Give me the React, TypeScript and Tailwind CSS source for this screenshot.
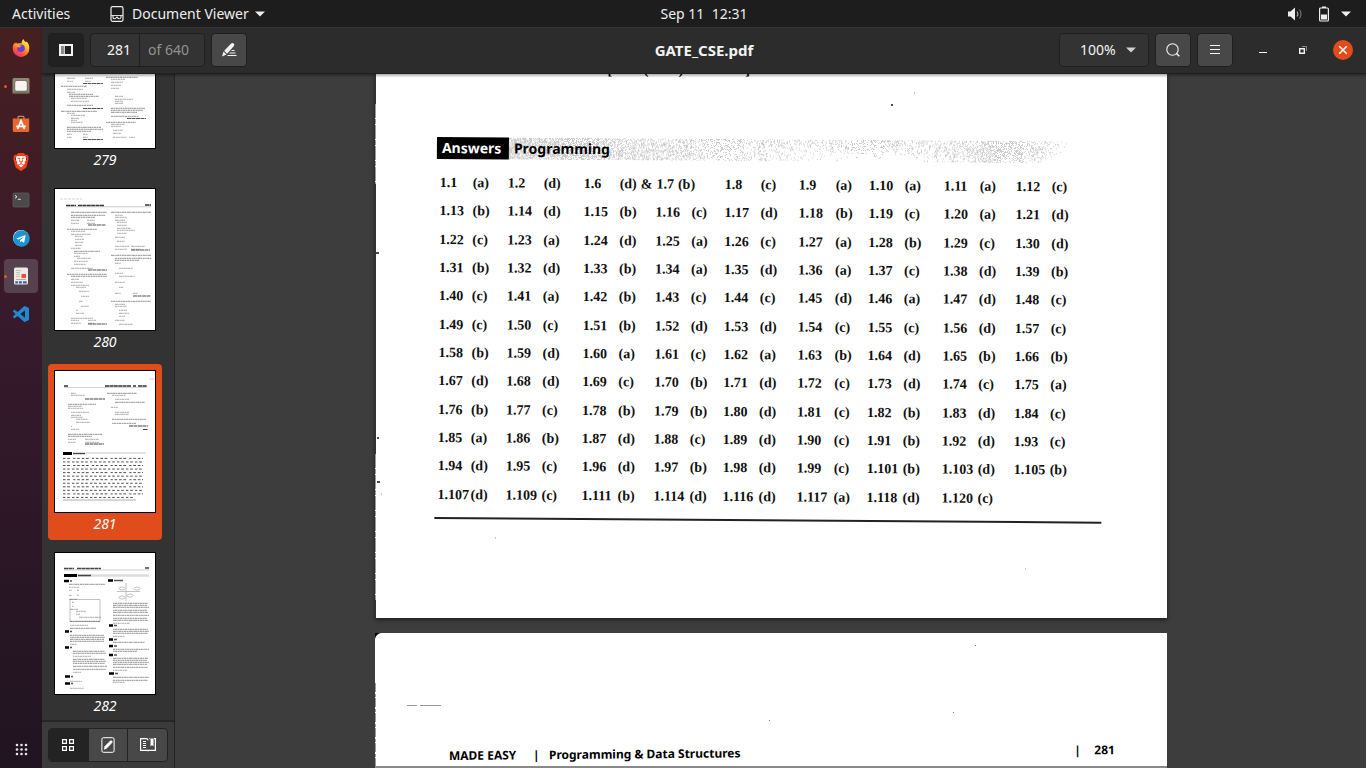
import type { ReactNode } from "react";
import { FaTelegram } from "react-icons/fa";
import { SiBrave } from "react-icons/si";

/* ---------- Answer key data ---------- */

const ANSWER_ROWS: string[] = [
  "1.13 b|1.14 d|1.15 b|1.16 c|1.17 d|1.18 b|1.19 c|1.20 a|1.21 d",
  "1.22 c|1.23 a|1.24 d|1.25 a|1.26 c|1.27 a|1.28 b|1.29 c|1.30 d",
  "1.31 b|1.32 d|1.33 b|1.34 a|1.35 d|1.36 a|1.37 c|1.38 d|1.39 b",
  "1.40 c|1.41 a|1.42 b|1.43 c|1.44 c|1.45 d|1.46 a|1.47 d|1.48 c",
  "1.49 c|1.50 c|1.51 b|1.52 d|1.53 d|1.54 c|1.55 c|1.56 d|1.57 c",
  "1.58 b|1.59 d|1.60 a|1.61 c|1.62 a|1.63 b|1.64 d|1.65 b|1.66 b",
  "1.67 d|1.68 d|1.69 c|1.70 b|1.71 d|1.72 c|1.73 d|1.74 c|1.75 a",
  "1.76 b|1.77 c|1.78 b|1.79 b|1.80 d|1.81 c|1.82 b|1.83 d|1.84 c",
  "1.85 a|1.86 b|1.87 d|1.88 c|1.89 d|1.90 c|1.91 b|1.92 d|1.93 c",
  "1.94 d|1.95 c|1.96 d|1.97 b|1.98 d|1.99 c|1.101 b|1.103 d|1.105 b",
  "1.107 d|1.109 c|1.111 b|1.114 d|1.116 d|1.117 a|1.118 d|1.120 c",
];

/* ---------- Thumbnails ---------- */

// Each mark is [x, y, width]; wide marks read as lines of tiny text.
type Mark = [number, number, number];

const P279: Mark[] = [
  [12, 71, 8], [12, 74, 6], [30, 71, 8], [30, 74, 6],
  [6, 79, 26], [12, 82, 16], [12, 85, 8], [14, 87, 24], [14, 89, 30], [16, 91, 16], [16, 94, 18],
  [12, 98, 26], [6, 104, 36], [12, 106, 8], [16, 108, 14], [16, 111, 8], [16, 113, 6], [16, 115, 12],
  [12, 120, 34], [12, 122, 36], [12, 124, 24], [12, 127, 5], [28, 127, 5], [12, 130, 5], [28, 130, 5],
  [51, 70, 32], [56, 72, 14], [56, 75, 12], [56, 78, 10], [56, 81, 8], [60, 89, 8], [60, 92, 18], [60, 94, 8], [60, 96, 8],
  [56, 101, 34], [56, 103, 32], [56, 105, 26], [56, 109, 28], [51, 115, 30], [56, 117, 14], [56, 119, 10], [58, 123, 10], [58, 126, 8], [58, 130, 14], [74, 130, 6],
];
const P280: Mark[] = [
  [16, 23, 36], [16, 26, 34], [16, 28, 24], [16, 31, 8], [32, 31, 8], [16, 34, 8], [32, 34, 8],
  [12, 40, 30], [16, 42, 14], [16, 45, 20], [20, 47, 8], [20, 50, 9], [20, 53, 8], [20, 56, 7],
  [16, 59, 10], [19, 62, 26], [19, 64, 14], [19, 67, 6], [22, 69, 14], [19, 72, 14], [19, 75, 12],
  [16, 79, 22], [12, 85, 40], [16, 87, 36], [16, 90, 8], [16, 93, 12], [16, 96, 18], [21, 98, 10],
  [24, 102, 10], [26, 107, 8], [24, 112, 4], [26, 117, 8], [21, 121, 2], [21, 124, 8], [16, 129, 22], [16, 131, 8], [33, 131, 8], [16, 134, 10], [33, 134, 6],
  [56, 23, 40], [60, 26, 8], [60, 28, 12], [60, 31, 10], [62, 33, 10], [62, 36, 10], [62, 39, 14], [62, 41, 18], [62, 44, 10], [60, 48, 10], [62, 52, 8],
  [60, 57, 14], [76, 57, 14], [60, 60, 12], [76, 60, 10], [56, 66, 40], [60, 69, 36], [60, 71, 24], [60, 74, 6], [64, 79, 14], [60, 84, 8], [64, 87, 16], [60, 93, 10], [64, 98, 4],
  [60, 104, 6], [78, 104, 5], [56, 112, 40], [60, 115, 10], [60, 117, 12], [64, 121, 8], [64, 124, 10], [64, 127, 6], [60, 131, 10], [64, 135, 14],
];
const P281: Mark[] = [
  [16, 22, 5], [16, 24, 14], [13, 33, 28], [13, 35, 14], [13, 37, 15], [16, 41, 18], [16, 44, 10], [16, 46, 12], [21, 48, 12], [21, 51, 14], [16, 55, 1], [16, 58, 8],
  [13, 63, 34], [13, 65, 24], [13, 68, 8], [30, 68, 14], [13, 71, 8], [30, 71, 14],
  [52, 22, 30], [57, 24, 14], [60, 28, 14], [60, 31, 30], [56, 36, 7], [60, 41, 14], [60, 43, 14], [57, 48, 34], [57, 52, 24],
];
const P282: Mark[] = [
  [14, 31, 36], [14, 34, 10], [14, 37, 3], [22, 37, 2], [14, 42, 3], [22, 42, 2], [14, 46, 8], [17, 49, 2], [17, 53, 2], [15, 56, 8], [21, 58, 10], [21, 61, 4], [24, 64, 22], [15, 68, 30],
  [15, 72, 18], [15, 75, 26], [15, 82, 34], [15, 84, 35], [15, 86, 34], [15, 88, 34], [15, 91, 7],
  [18, 98, 32], [18, 100, 33], [18, 103, 18], [18, 106, 32], [18, 108, 33], [18, 110, 32], [18, 113, 34], [18, 116, 33], [18, 119, 8], [15, 128, 12], [15, 135, 14],
  [58, 50, 35], [58, 52, 34], [58, 54, 36], [58, 57, 34], [58, 59, 35], [58, 62, 36], [58, 65, 34], [58, 67, 35], [58, 70, 17], [58, 76, 35], [58, 78, 36], [58, 80, 35], [58, 83, 12],
  [58, 89, 32], [58, 96, 36], [58, 98, 24], [58, 105, 35], [58, 107, 34], [58, 109, 36], [58, 111, 34], [58, 114, 35], [58, 117, 14], [58, 124, 36], [58, 127, 35], [58, 129, 12],
];

function Marks({ marks }: { marks: Mark[] }) {
  return (
    <g stroke="#555" strokeWidth="1">
      {marks.map(([x, y, w], i) => (
        <path
          key={i}
          d={`M${x} ${y + 0.3}h${w}`}
          strokeOpacity={w > 22 ? 0.65 : 0.5}
          strokeDasharray={i % 3 === 0 ? "3 .4 1.4 .5" : i % 3 === 1 ? "2.2 .5 1.5 .4" : "1.6 .4 2.4 .5"}
        />
      ))}
    </g>
  );
}

function ThumbSvg({ children }: { children: ReactNode }) {
  return (
    <svg viewBox="0 0 100 141" className="block w-full" aria-hidden="true">
      {children}
    </svg>
  );
}

function Thumb279() {
  return (
    <ThumbSvg>
      <Marks marks={P279} />
      <path d="M28 76.500h20M28 101.500h20M72 111.500h19M28 132.500h20" stroke="#555" strokeWidth="1.200" strokeDasharray="4 .5" />
    </ThumbSvg>
  );
}
function Thumb280() {
  return (
    <ThumbSvg>
      <Marks marks={P280} />
      <path d="M11 16.500h10M23 16.500h26M90 16h6" stroke="#333" strokeWidth="1.500" strokeDasharray="4 .4" />
      <path d="M5 10h22" stroke="#bbb" strokeWidth=".6" strokeDasharray="3 1" />
      <path d="M11 17.800h85" stroke="#999" strokeWidth=".5" />
      <path d="M33 36h18M33 81h19M76 61h19M33 135h19M78 107h18" stroke="#555" strokeWidth="1.200" strokeDasharray="4 .5" />
    </ThumbSvg>
  );
}
function Thumb281() {
  return (
    <ThumbSvg>
      <path d="M94 8h5" stroke="#aaa" strokeWidth=".6" />
      <path d="M9 15h4M50 15h26M78 15h3M83 15h9" stroke="#333" strokeWidth="1.400" strokeDasharray="4 .4" />
      <path d="M9 16.500h83" stroke="#aaa" strokeWidth=".5" />
      <Marks marks={P281} />
      <path d="M30 28h20M74 55h19M88 58.500h5M30 73h19" stroke="#444" strokeWidth="1.100" strokeDasharray="4 .5" />
      <path d="M8 82.500h9" stroke="#000" strokeWidth="3" />
      <path d="M18 82.500h12" stroke="#444" strokeWidth="1.400" />
      <path d="M31 82h60" stroke="#e2e2e2" strokeWidth="2" />
      {Array.from({ length: 12 }, (_, i) => (
        <path
          key={i}
          d={`M8 ${87.4 + i * 3.55}H${i === 11 ? 78 : 88}`}
          stroke="#333"
          strokeOpacity={0.85}
          strokeWidth="1"
          strokeDasharray={i % 2 ? "2.4 1.8 2.6 2.2" : "2.6 1.6 2.8 3.2 2.2 1.8 2.6 1.9"}
        />
      ))}
      <path d="M8 129h73" stroke="#777" strokeWidth=".6" />
    </ThumbSvg>
  );
}
function Thumb282() {
  return (
    <ThumbSvg>
      <path d="M9 15.500h10M22 15.500h24M90 15h4" stroke="#444" strokeWidth="1.300" strokeDasharray="4 .4" />
      <path d="M9 17h85" stroke="#999" strokeWidth=".5" />
      <path d="M22 22.500h72" stroke="#ddd" strokeWidth="2.500" />
      <path d="M9 22.500h13" stroke="#000" strokeWidth="3" />
      <path d="M23 22.500h13" stroke="#444" strokeWidth="1.500" />
      <path d="M9 28h5M53 27.500h5M10 78.500h4M10 94.500h4M10 123.500h5M10 130.500h5M54 72.500h4M54 86.500h4M54 93h4M54 102h4M54 120.500h5" stroke="#000" strokeWidth="2.600" />
      <path d="M59 27.500h9M15 28h2M15 78.500h2M15 94.500h2M16 123.500h2M16 130.500h2M59 72.500h3M59 86.500h3M59 93h3M59 102h3M60 120.500h3" stroke="#555" strokeWidth="1.500" />
      <g fill="none" stroke="#999" strokeWidth=".6">
        <path d="M15 46.500h30v22h-30zM71 30v18M62 38.500h23" />
        <ellipse cx="67" cy="35.500" rx="3" ry="1.500" />
        <ellipse cx="82" cy="35.500" rx="3" ry="1.500" />
        <ellipse cx="67" cy="44.500" rx="3" ry="1.500" />
        <ellipse cx="75" cy="42.500" rx="3" ry="1.500" />
      </g>
      <Marks marks={P282} />
    </ThumbSvg>
  );
}

const THUMBS = [
  { page: 279, art: <Thumb279 /> },
  { page: 280, art: <Thumb280 /> },
  { page: 281, art: <Thumb281 /> },
  { page: 282, art: <Thumb282 /> },
];

/* ---------- Halftone band behind the section heading ---------- */

function halftonePath(width: number, height: number) {
  let seed = 7;
  const rand = () => {
    seed = (seed * 1103515245 + 12345) % 2147483648;
    return seed / 2147483648;
  };
  let d = "";
  for (let y = 0; y < height; y++) {
    for (let x = 0; x < width; x++) {
      const t = x / width;
      const v = y / height;
      const left = 0.85 - t * 1.4;
      const middle = 0.4 - v * 0.45;
      const right = 0.7 - Math.abs(t - 0.86) * 3.5 - Math.abs(v - 0.4) * 0.4;
      let p = Math.max(left, middle, right);
      if (t > 0.96) p *= (1 - t) * 20;
      if ((x + y) % 2) p *= 0.5;
      if (rand() < p) d += `M${x} ${y}h1v1h-1z`;
    }
  }
  return d;
}
const HALFTONE = halftonePath(560, 22);

/* ---------- Dock icons ---------- */

function FirefoxIcon() {
  return (
    <svg viewBox="0 0 18 18" className="size-[18px]" aria-hidden="true">
      <defs>
        <linearGradient id="ff" x1="0.8" y1="0.05" x2="0.25" y2="1">
          <stop offset="0" stopColor="#fff14a" />
          <stop offset=".4" stopColor="#ffa928" />
          <stop offset=".7" stopColor="#ff5a36" />
          <stop offset="1" stopColor="#e8267e" />
        </linearGradient>
      </defs>
      <path d="M11.500 0c.3 1.500 1.200 2.300 2.400 3.200l.8-.7c1.800 2 2.800 4.300 2.600 7A8.300 8.300 0 0 1 .7 9.700C.6 7.500 1.300 5.300 2.500 3.700l.4 1.200 1-1.700 1.300 1.500C7 4 8.600 4.200 9.600 4.600 9.400 3 10.200 1.300 11.500 0z" fill="url(#ff)" />
      <circle cx="9" cy="9.200" r="3.800" fill="#6b3fd0" />
      <path d="M4.300 6.200c1.200-.8 2.700-.6 3.700.1.800 0 1.600.2 2 .6-1.400.2-2 1-2.700 1.600C5.500 8.400 4.600 7.500 4.300 6.200z" fill="#ff9a2a" />
    </svg>
  );
}
function FilesIcon() {
  return (
    <svg viewBox="0 0 18 18" className="size-[18px]" aria-hidden="true">
      <rect x=".5" y="1" width="17" height="16" rx="1.500" fill="#8d8775" />
      <rect x=".5" y="15.500" width="17" height="1.500" rx=".7" fill="#5f5b4e" />
      <rect x="2.500" y="3.500" width="13" height="11" rx="2" fill="#6e695a" />
      <rect x="3.200" y="4" width="11.600" height="9.800" rx="1.600" fill="#f6f5f2" />
    </svg>
  );
}
function SoftwareIcon() {
  return (
    <svg viewBox="0 0 18 18" className="size-[18px]" aria-hidden="true">
      <path d="M6 4V2.400Q6 1.300 7.200 1.300h3.600Q12 1.300 12 2.400V4" fill="none" stroke="#c9a58c" strokeWidth="1.100" />
      <path d="M.8 3.500h16.400v12.200q0 1.300-1.300 1.300H2.100Q.8 17 .8 15.700z" fill="#e9662f" />
      <path d="M5.600 14 9 5.800l3.400 8.200M4.200 11.300h9.600" fill="none" stroke="#fff" strokeWidth="1.700" />
    </svg>
  );
}
function BraveIcon() {
  return (
    <span className="relative flex size-[18px] items-center justify-center">
      <span className="absolute h-3 w-2.5 rounded-b-full bg-white" />
      <SiBrave className="relative size-[18px] text-[#f4431c]" aria-hidden="true" />
    </span>
  );
}
function TerminalIcon() {
  return (
    <svg viewBox="0 0 18 18" className="size-[18px]" aria-hidden="true">
      <rect x="1" y="2" width="16" height="14" rx="1.200" fill="#4a4a4a" stroke="#5e5e5e" strokeWidth=".8" />
      <path d="m3 4.300 2 1.500-2 1.500M5.800 8.300h3" fill="none" stroke="#f2f2f2" strokeWidth=".9" />
    </svg>
  );
}
function TelegramIcon() {
  return (
    <span className="flex size-[16px] items-center justify-center rounded-full bg-white">
      <FaTelegram className="size-[17px] shrink-0 text-[#1c93d2]" aria-hidden="true" />
    </span>
  );
}
function EvinceIcon() {
  return (
    <svg viewBox="0 0 18 18" className="size-[18px]" aria-hidden="true">
      <rect x="2" y=".5" width="14" height="17" rx="1.500" fill="#eceae6" />
      <path d="M4 3.500h5M4 5.500h4M4 7.500h4M4 9.500h4" stroke="#b9b5af" strokeWidth=".8" />
      <rect x="9.500" y="7" width="4.500" height="4" fill="#e5503e" />
      <path d="M4 12.500h10" stroke="#d9786c" strokeWidth=".7" />
      <path d="M3.300 14.300h2.600v2.200H3.300zM6.900 14.300h3v2.200h-3zM11 14.300h3.700v2.200H11z" fill="#3a62a0" />
    </svg>
  );
}
function CodeIcon() {
  return (
    <svg viewBox="0 0 24 24" className="size-4" aria-hidden="true">
      <path
        fill="#1f8ad2"
        d="M23.150 2.587L18.210.21a1.494 1.494 0 0 0-1.705.29l-9.460 8.630-4.120-3.128a.999.999 0 0 0-1.276.057L.327 7.261A1 1 0 0 0 .326 8.740L3.899 12 .326 15.260a1 1 0 0 0 .001 1.479L1.650 17.940a.999.999 0 0 0 1.276.057l4.120-3.128 9.460 8.630a1.492 1.492 0 0 0 1.704.290l4.942-2.377A1.500 1.500 0 0 0 24 20.060V3.939a1.500 1.500 0 0 0-.850-1.352zm-5.146 14.861L10.826 12l7.178-5.448v10.896z"
      />
    </svg>
  );
}

const DOCK = [
  { name: "Firefox", icon: <FirefoxIcon /> },
  { name: "Files", icon: <FilesIcon />, running: true },
  { name: "Ubuntu Software", icon: <SoftwareIcon /> },
  { name: "Brave", icon: <BraveIcon /> },
  { name: "Terminal", icon: <TerminalIcon /> },
  { name: "Telegram", icon: <TelegramIcon /> },
  { name: "Document Viewer", icon: <EvinceIcon />, running: true, active: true },
  { name: "Visual Studio Code", icon: <CodeIcon /> },
];

function Caret({ className }: { className: string }) {
  return (
    <svg viewBox="0 0 10 6" className={className} aria-hidden="true">
      <path d="M0 .5h10L5 5.500z" fill="currentColor" />
    </svg>
  );
}

/* ---------- Shell pieces ---------- */

function TopBar() {
  return (
    <header className="grid h-7 shrink-0 grid-cols-[1fr_auto_1fr] items-center border-b border-[#353535] bg-[#1d1d1d] text-sm text-[#eeeeee]">
      <div className="flex items-center">
        <button className="w-[98px] pl-3 text-left">Activities</button>
        <button className="flex items-center pl-3">
          <svg viewBox="0 0 14 16" className="mr-2 h-4 w-3.5" fill="none" stroke="currentColor" aria-hidden="true">
            <rect x="1" y=".7" width="12" height="14.600" rx="1.500" strokeWidth="1.200" />
            <path d="M1 9.500h12" strokeWidth=".9" />
            <path d="M3 9.500v2q0 1.300 1.500 1.300T6.300 11.500q.7-.7 1.400 0 0 1.300 1.500 1.300T11 11.500v-2" strokeWidth="1.100" />
          </svg>
          Document Viewer
          <Caret className="ml-1.5 h-1.5 w-2.5" />
        </button>
      </div>
      <button className="pl-[42px]">Sep 11&nbsp; 12:31</button>
      <button className="mr-[15px] flex items-center gap-3 justify-self-end" aria-label="System menu">
        <svg viewBox="0 0 16 14" className="mr-1 h-3.5 w-4" aria-hidden="true">
          <path d="M1 4.500h2.500L8 .5v13L3.500 9.500H1z" fill="currentColor" />
          <path d="M10 4.500q1.800 2.500 0 5" fill="none" stroke="#aaa" strokeWidth="1.100" />
          <path d="M12.500 2.500q3 4.500 0 9" fill="none" stroke="#777" strokeWidth="1.100" />
        </svg>
        <svg viewBox="0 0 10 16" className="h-4 w-2.5" aria-hidden="true">
          <rect x=".6" y="2" width="8.800" height="13" rx="1" fill="none" stroke="currentColor" strokeWidth="1.200" />
          <path d="M3 .5h4V2H3zM2 8.500h6v5H2z" fill="currentColor" />
        </svg>
        <Caret className="h-1.5 w-2.5" />
      </button>
    </header>
  );
}

function Dock() {
  return (
    <nav aria-label="Dock" className="flex w-[42px] shrink-0 flex-col items-center gap-1 bg-linear-to-b from-[#471f20] via-[#35192c] via-45% to-[#20141f] pt-[3px]">
      {DOCK.map(({ name, icon, running, active }) => (
        <button
          key={name}
          aria-label={name}
          className={
            active
              ? "relative flex size-[34px] items-center justify-center rounded bg-[#56414e]"
              : "relative flex size-[34px] items-center justify-center rounded"
          }
        >
          {running && <span className="absolute top-4 left-0 size-[3px] rounded-full bg-[#e95420]" />}
          {icon}
        </button>
      ))}
      <button aria-label="Show Applications" className="mt-auto mb-0.5 flex size-[34px] items-center justify-center">
        <svg viewBox="0 0 13 13" className="size-[13px] text-[#e6e6e6]" fill="currentColor" aria-hidden="true">
          {[2, 6.5, 11].map((y) => [2, 6.5, 11].map((x) => <circle key={`${x}-${y}`} cx={x} cy={y} r="1.300" />))}
        </svg>
      </button>
    </nav>
  );
}

const FLAT = "flex h-[34px] items-center rounded border border-[#1f1f1f]";

function Toolbar() {
  return (
    <div className="relative z-10 grid h-[46px] shrink-0 grid-cols-[1fr_auto_1fr] items-center border-b border-[#1f1f1f] bg-[#2c2c2c] px-1.5 pb-0.5 text-sm text-[#f3f3f3] shadow-[0_2px_2px_rgba(0,0,0,0.3)]">
      <div className="flex items-center">
        <button aria-label="Side pane" aria-pressed="true" className={`${FLAT} w-9 justify-center bg-[#212121]`}>
          <svg viewBox="0 0 14 12" className="h-3 w-3.5" aria-hidden="true">
            <path d="M1 1h12v10H1z" fill="none" stroke="currentColor" strokeWidth="2" />
            <path d="M2 2h2.500v8H2z" fill="#888" />
            <path d="M5.200 1v10" stroke="currentColor" strokeWidth="1.200" />
          </svg>
        </button>
        <div className={`${FLAT} ml-1.5 w-[115px] bg-[#333333]`}>
          <input
            aria-label="Page"
            defaultValue="281"
            className="h-full w-[49px] border-r border-[#1f1f1f] bg-transparent pr-2 text-right outline-none"
          />
          <span className="pl-2 text-[#929292]">of 640</span>
        </div>
        <button aria-label="Annotate the document" className={`${FLAT} ml-1.5 w-9 justify-center bg-[#484848]`}>
          <svg viewBox="0 0 16 16" className="size-4" fill="currentColor" aria-hidden="true">
            <path d="M1 14.500 2.500 9.500 5.500 12.500zM3.200 8.800l7-7.300q1.300-1.200 2.500 0t.2 2.600l-6.800 7.700z" />
            <path d="M10.500 8.500h3M8.500 11h6M6.500 13.500h9" stroke="currentColor" strokeWidth="1.100" />
          </svg>
        </button>
      </div>
      <h1 className="text-[15px] leading-5 font-bold">GATE_CSE.pdf</h1>
      <div className="flex items-center justify-end">
        <div className={`${FLAT} relative w-[90px] bg-[#333333]`}>
          <select aria-label="Zoom" defaultValue="100%" className="h-full w-full appearance-none bg-transparent pl-5 outline-none">
            <option>100%</option>
            <option>150%</option>
          </select>
          <Caret className="pointer-events-none absolute right-3 h-1.5 w-2.5 text-[#cfcfcf]" />
        </div>
        <button aria-label="Find" className={`${FLAT} ml-1.5 w-9 justify-center bg-[#484848]`}>
          <svg viewBox="0 0 16 16" className="size-4" fill="none" stroke="currentColor" aria-hidden="true">
            <circle cx="7.500" cy="7.500" r="5.700" strokeWidth="1.100" />
            <path d="m11.500 11.500 2.800 2.800" strokeWidth="1.500" />
          </svg>
        </button>
        <button aria-label="Menu" className={`${FLAT} ml-1.5 w-9 justify-center bg-[#484848]`}>
          <svg viewBox="0 0 12 12" className="size-3" stroke="currentColor" aria-hidden="true">
            <path d="M1 1.500h10M1 5.500h10M1 9.500h10" />
          </svg>
        </button>
        <button aria-label="Minimize" className="ml-5 flex size-5 items-center justify-center">
          <svg viewBox="0 0 8 8" className="size-2" aria-hidden="true">
            <path d="M0 6h8v1H0z" fill="currentColor" />
          </svg>
        </button>
        <button aria-label="Restore" className="ml-5 flex size-5 items-center justify-center">
          <svg viewBox="0 0 8 8" className="size-2" fill="none" aria-hidden="true">
            <path d="M3 .5h4.500V5" stroke="#8a8a8a" />
            <path d="M.7 2.700h4.600v4.600H.7z" stroke="currentColor" strokeWidth="1.400" />
          </svg>
        </button>
        <button aria-label="Close" className="mr-[7px] ml-5 flex size-5 items-center justify-center rounded-full bg-[#e04c1b]">
          <svg viewBox="0 0 10 10" className="size-2.5" stroke="#fff" strokeWidth="1.500" aria-hidden="true">
            <path d="m1.200 1.200 7.600 7.600M8.800 1.200 1.200 8.800" />
          </svg>
        </button>
      </div>
    </div>
  );
}

function Sidebar() {
  return (
    <aside className="flex w-[133px] shrink-0 flex-col border-r border-[#222222] bg-[#333333]">
      <div className="min-h-0 flex-1 overflow-hidden">
        <ul className="-mt-[74px] flex flex-col gap-1.5 px-1.5">
          {THUMBS.map(({ page, art }) => (
            <li key={page}>
              <button
                className={
                  page === 281
                    ? "flex h-44 w-[114px] flex-col items-center rounded bg-[#e04c1b] p-1.5 text-white"
                    : "flex h-44 w-[114px] flex-col items-center rounded p-1.5 text-white"
                }
              >
                <span className="block w-full border border-black bg-white">{art}</span>
                <span className="text-sm leading-[22px] italic">{page}</span>
              </button>
            </li>
          ))}
        </ul>
      </div>
      <div className="h-12 shrink-0 border-t-2 border-[#262626] bg-[#3b3b3b] px-1.5 pt-1.5">
        <div className="flex h-[34px] w-[120px] divide-x divide-[#222222] overflow-hidden rounded border border-[#222222] bg-[#484848] text-white">
          <button aria-label="Thumbnails" className="flex flex-1 items-center justify-center bg-[#232323]">
            <svg viewBox="0 0 12 12" className="size-3" fill="none" stroke="currentColor" strokeWidth="1.200" aria-hidden="true">
              <path d="M.6.6h3.800v3.800H.6zM7.600.6h3.800v3.800H7.600zM.6 7.600h3.800v3.800H.6zM7.600 7.600h3.800v3.800H7.600z" />
            </svg>
          </button>
          <button aria-label="Annotations" className="flex flex-1 items-center justify-center">
            <svg viewBox="0 0 14 16" className="h-4 w-3.5" aria-hidden="true">
              <rect x=".9" y=".7" width="12.200" height="14.600" rx="1.500" fill="none" stroke="currentColor" />
              <path d="m2.800 12.800.9-3.500 5.500-5.500q1-.8 1.900 0t.1 1.900L5.800 11.500z" fill="currentColor" />
            </svg>
          </button>
          <button aria-label="Bookmarks" className="flex flex-1 items-center justify-center">
            <svg viewBox="0 0 16 14" className="h-3.5 w-4" fill="none" stroke="currentColor" aria-hidden="true">
              <path d="M8 13.300v-1H.6V.7H6q2 0 2 1.500M8 12.300h7.400V.7H14M9.500.7h.5" strokeWidth="1.200" />
              <path d="M3 3.500h3M3 5.500h3M3 7.500h3M3 9.500h3" />
              <path d="M10.500.5h3v8l-1.500-1.500-1.500 1.500z" fill="currentColor" stroke="none" />
            </svg>
          </button>
        </div>
      </div>
    </aside>
  );
}

/* ---------- Document ---------- */

const COLS = [33, 35, 36, 40, 36, 36, 36, 33, 36, 38, 37, 33, 36, 39, 36, 36, 36, 32];

function AnswerTable() {
  const first = ["1.8 c", "1.9 a", "1.10 a", "1.11 a", "1.12 c"];
  const pair = (entry: string) => {
    const [n, a] = entry.split(" ");
    return [
      <th key={n} scope="row" className="p-0 text-left whitespace-nowrap">{n}</th>,
      <td key={`${n}a`} className="p-0 whitespace-nowrap">({a})</td>,
    ];
  };
  return (
    <table className="mt-2.5 ml-[3px] h-[340px] w-[644px] table-fixed border-collapse font-['Liberation_Serif',serif] text-[14px] leading-5 font-bold text-[#111111]">
      <colgroup>
        {COLS.map((w, i) => (
          <col key={i} style={{ width: w }} />
        ))}
      </colgroup>
      <tbody>
        <tr>
          {pair("1.1 a")}
          {pair("1.2 d")}
          <th scope="row" className="p-0 text-left">1.6</th>
          <td colSpan={3} className="p-0 whitespace-nowrap">
            <span className="flex gap-1">
              <span>(d)</span>
              <span>&amp;</span>
              <span>1.7</span>
              <span>(b)</span>
            </span>
          </td>
          {first.map(pair)}
        </tr>
        {ANSWER_ROWS.map((row) => (
          <tr key={row}>{row.split("|").map(pair)}</tr>
        ))}
      </tbody>
    </table>
  );
}

function PageOne() {
  return (
    <article className="relative mx-auto w-full max-w-[792px] overflow-hidden bg-white pb-[99px] pl-[62px] shadow-[0_2px_4px_rgba(0,0,0,0.5)]">
      <p className="-mt-3.5 mb-[57px] pl-[171px] font-['Liberation_Serif',serif] text-[14px] leading-5 font-bold">
        [2016 (Set-2) : 2 Marks]
      </p>
      <section className="w-[667px] origin-top-left rotate-[0.4deg]">
        <h2 className="flex h-[22px] items-center text-sm font-bold">
          <span className="flex h-full w-[72px] items-center bg-black pl-[5px] text-white">Answers</span>
          <span className="relative flex h-full w-[560px] items-center pl-[5px]">
            <svg viewBox="0 0 560 22" className="absolute inset-0 h-full w-full" aria-hidden="true">
              <path d={HALFTONE} fill="#cccccc" />
            </svg>
            <span className="relative">Programming</span>
          </span>
        </h2>
        <AnswerTable />
        <hr className="mt-2 border-t-2 border-[#222222]" />
      </section>
      <svg viewBox="0 0 792 544" className="pointer-events-none absolute inset-0 h-full w-full" aria-hidden="true">
        <path d="M.5 0v30M.5 110v270M.5 526v18" stroke="#333" />
        <path d="M.5 30v80M.5 380v146" stroke="#999" strokeDasharray="14 1 5 1" />
        <path d="M1 179h3M2 364h2M2 408h3M517 30v2" stroke="#111" strokeWidth="1.500" />
        <path d="M6 420h1M120 464h1M650 495h1M266 115h2M539 19h1" stroke="#999" />
      </svg>
    </article>
  );
}

function PageTwo() {
  return (
    <article className="relative mx-auto mt-[15px] w-full max-w-[792px] bg-white pt-[115px] pr-[52px] pl-[74px]">
      <div className="flex origin-bottom-left -rotate-[0.5deg] items-center text-[12px] leading-4 font-bold">
        <span className="w-[84px]">MADE EASY</span>
        <span className="w-4">|</span>
        <span className="flex-1">Programming &amp; Data Structures</span>
        <span className="w-5">|</span>
        <span>281</span>
      </div>
      <hr className="mt-0.5 -mr-[52px] -ml-[74px] border-t-2 border-[#8a8a8a]" />
      <svg viewBox="0 0 792 135" className="pointer-events-none absolute inset-x-0 top-0 w-full" aria-hidden="true">
        <path d="M0 0h6Q1 1 0 6z" fill="#000" />
        <path d="M.5 50v85" stroke="#999" strokeDasharray="9 2 3 1" />
        <path d="M32 72.500h10M45 72.500h21" stroke="#999" />
        <path d="M600 12.500h1M578 79.500h1M394 87.500h1" stroke="#777" />
      </svg>
    </article>
  );
}

export default function App() {
  return (
    <div className="flex h-screen flex-col overflow-hidden bg-[#3c3c3b] font-['Noto_Sans',sans-serif]">
      <TopBar />
      <div className="flex min-h-0 flex-1">
        <Dock />
        <div className="flex min-w-0 flex-1 flex-col">
          <Toolbar />
          <div className="flex min-h-0 flex-1">
            <Sidebar />
            <main className="min-w-0 flex-1 overflow-hidden bg-[#3d3d3d] text-black">
              <PageOne />
              <PageTwo />
            </main>
          </div>
        </div>
      </div>
    </div>
  );
}
